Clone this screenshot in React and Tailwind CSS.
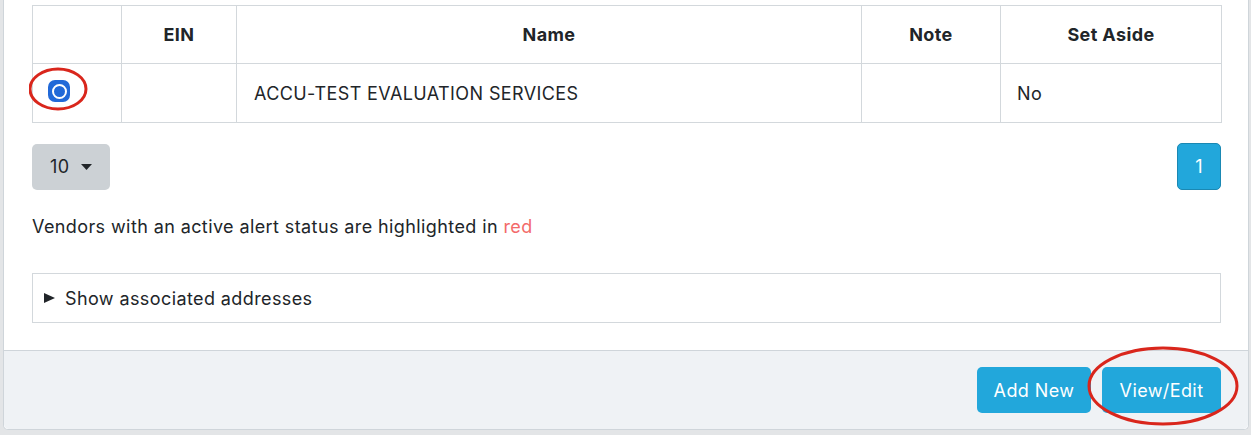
export default function App() {
  const font = { fontFamily: "Inter, 'Liberation Sans', sans-serif" };
  return (
    <div className="h-[435px] w-[1251px] overflow-hidden bg-[#e3e5e7] pl-[3px] tracking-[0.4px] text-[#212529]" style={font}>
      <div className="w-[1246px] rounded-b-[5px] border-x border-b border-[#cfd5da] bg-white">
        {/* body */}
        <div className="pl-[28px] pr-[27px] pt-[5px]">
          <table className="w-[1189px] table-fixed border-collapse text-[18px]">
            <colgroup>
              <col className="w-[89px]" />
              <col className="w-[115px]" />
              <col className="w-[625px]" />
              <col className="w-[139px]" />
              <col className="w-[221px]" />
            </colgroup>
            <thead>
              <tr className="h-[58px]">
                <th className="border border-[#d3d8dc]"></th>
                <th className="border border-[#d3d8dc] font-bold">EIN</th>
                <th className="border border-[#d3d8dc] font-bold">Name</th>
                <th className="border border-[#d3d8dc] font-bold">Note</th>
                <th className="border border-[#d3d8dc] font-bold">Set Aside</th>
              </tr>
            </thead>
            <tbody>
              <tr className="h-[59px]">
                <td className="relative border border-[#d3d8dc]">
                  <div className="mb-[4px] ml-[15px] flex h-[22px] w-[22px] items-center justify-center rounded-[7px] bg-[#2169d8]">
                    <div className="flex h-[15px] w-[15px] items-center justify-center rounded-full border-[2px] border-white">
                      <div className="h-[8px] w-[8px] rounded-full bg-[#2169d8]" />
                    </div>
                  </div>
                  <svg className="absolute left-[-4px] top-[2px]" width="62" height="48" viewBox="0 0 62 48">
                    <ellipse cx="29" cy="23" rx="28" ry="20" fill="none" stroke="#d9261c" strokeWidth="3" />
                  </svg>
                </td>
                <td className="border border-[#d3d8dc]"></td>
                <td className="border border-[#d3d8dc] pl-[17px]">ACCU-TEST EVALUATION SERVICES</td>
                <td className="border border-[#d3d8dc]"></td>
                <td className="border border-[#d3d8dc] pl-[16px]">No</td>
              </tr>
            </tbody>
          </table>

          <div className="mt-[20px] flex items-center justify-between">
            <button className="flex h-[46px] w-[78px] items-center gap-[12px] rounded-[5px] bg-[#ccd1d5] pl-[18px] text-[18px]">
              10
              <svg width="11" height="6" viewBox="0 0 11 6"><path d="M0 0h11L5.5 6z" fill="#212529" /></svg>
            </button>
            <button className="h-[47px] w-[44px] rounded-[5px] border border-[#1a88b3] bg-[#22a7db] text-[18px] text-white">1</button>
          </div>

          <p className="mt-[24px] text-[18px] leading-[26px]">
            Vendors with an active alert status are highlighted in <span className="text-[#f36a6a]">red</span>
          </p>

          <div className="mt-[33px] flex h-[50px] items-center border border-[#d3d8dc] pl-[11px] text-[18px]">
            <svg width="12" height="12" viewBox="0 0 12 12"><path d="M0 1l11 5-11 5z" fill="#212529" /></svg>
            <span className="ml-[9px]">Show associated addresses</span>
          </div>
          <div className="h-[27px]" />
        </div>

        {/* footer */}
        <div className="flex h-[79px] items-center justify-end gap-[11px] rounded-b-[5px] border-t border-[#cfd5da] bg-[#eff2f5] pr-[27px]">
          <button className="h-[46px] w-[114px] rounded-[5px] bg-[#22a7db] text-[18px] text-white">Add New</button>
          <div className="relative">
            <button className="h-[46px] w-[119px] rounded-[5px] bg-[#22a7db] text-[18px] text-white">View/Edit</button>
            <svg className="absolute left-[-15px] top-[-21px]" width="154" height="82" viewBox="0 0 154 82">
              <ellipse cx="76" cy="40" rx="74" ry="38" fill="none" stroke="#d9261c" strokeWidth="3" />
            </svg>
          </div>
        </div>
      </div>
    </div>
  );
}
